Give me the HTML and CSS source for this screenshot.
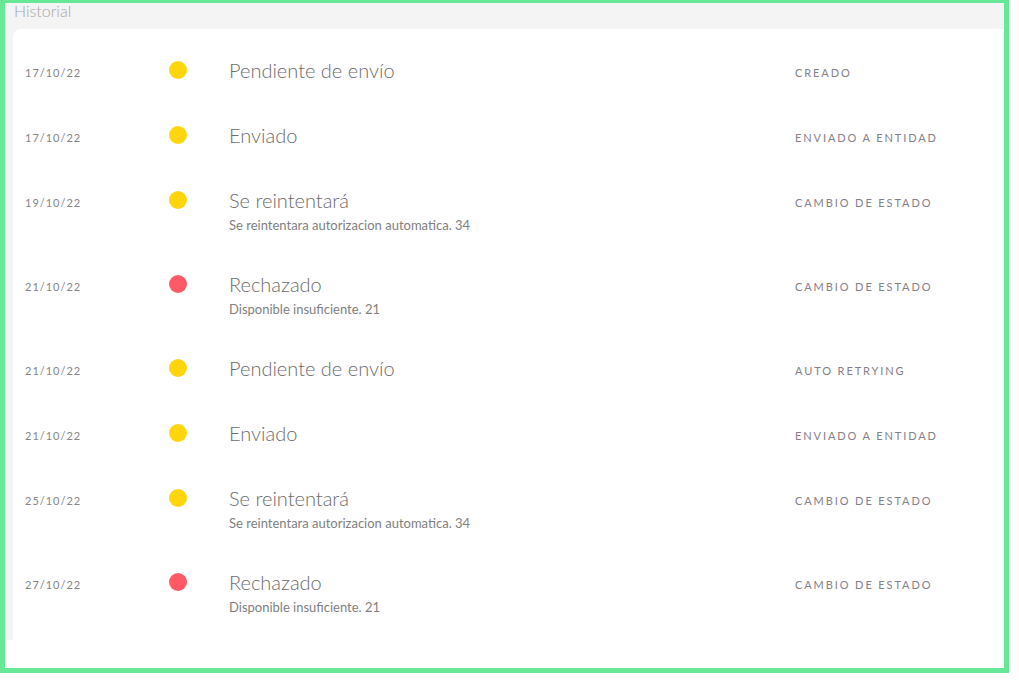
FILE: index.html
```html
<!DOCTYPE html>
<html lang="es">
<head>
<meta charset="utf-8">
<title>Historial</title>
<link rel="stylesheet" href="styles.css">
</head>
<body>
<div class="frame">
  <section class="panel">
    <h2 class="panel-title">Historial</h2>
    <div class="card">
      <div class="row">
        <div class="date">17/10/22</div>
        <div class="dot-cell"><span class="dot yellow"></span></div>
        <div class="info"><div class="title">Pendiente de envío</div></div>
        <div class="label">CREADO</div>
      </div>
      <div class="row">
        <div class="date">17/10/22</div>
        <div class="dot-cell"><span class="dot yellow"></span></div>
        <div class="info"><div class="title">Enviado</div></div>
        <div class="label">ENVIADO A ENTIDAD</div>
      </div>
      <div class="row">
        <div class="date">19/10/22</div>
        <div class="dot-cell"><span class="dot yellow"></span></div>
        <div class="info"><div class="title">Se reintentará</div><div class="sub">Se reintentara autorizacion automatica. 34</div></div>
        <div class="label">CAMBIO DE ESTADO</div>
      </div>
      <div class="row">
        <div class="date">21/10/22</div>
        <div class="dot-cell"><span class="dot red"></span></div>
        <div class="info"><div class="title">Rechazado</div><div class="sub">Disponible insuficiente. 21</div></div>
        <div class="label">CAMBIO DE ESTADO</div>
      </div>
      <div class="row">
        <div class="date">21/10/22</div>
        <div class="dot-cell"><span class="dot yellow"></span></div>
        <div class="info"><div class="title">Pendiente de envío</div></div>
        <div class="label">AUTO RETRYING</div>
      </div>
      <div class="row">
        <div class="date">21/10/22</div>
        <div class="dot-cell"><span class="dot yellow"></span></div>
        <div class="info"><div class="title">Enviado</div></div>
        <div class="label">ENVIADO A ENTIDAD</div>
      </div>
      <div class="row">
        <div class="date">25/10/22</div>
        <div class="dot-cell"><span class="dot yellow"></span></div>
        <div class="info"><div class="title">Se reintentará</div><div class="sub">Se reintentara autorizacion automatica. 34</div></div>
        <div class="label">CAMBIO DE ESTADO</div>
      </div>
      <div class="row">
        <div class="date">27/10/22</div>
        <div class="dot-cell"><span class="dot red"></span></div>
        <div class="info"><div class="title">Rechazado</div><div class="sub">Disponible insuficiente. 21</div></div>
        <div class="label">CAMBIO DE ESTADO</div>
      </div>
    </div>
  </section>
</div>
</body>
</html>
```

FILE: styles.css
```css
* { box-sizing: border-box; }
html, body {
  margin: 0;
  padding: 0;
  background: #ffffff;
  font-family: Lato, "Open Sans", "Liberation Sans", sans-serif;
}
.frame {
  width: 1009px;
  height: 673px;
  border: 5px solid #66e896;
  border-top-width: 3px;
  overflow: hidden;
  background: #ffffff;
}
.panel {
  height: 637px;
  background: #f4f4f4;
  padding-left: 8px;
  display: flex;
  flex-direction: column;
}
.panel-title {
  margin: 0;
  height: 26px;
  padding-left: 1px;
  font-size: 16px;
  line-height: 16px;
  font-weight: 300;
  color: #a6a6a6;
}
.card {
  flex: 1;
  width: 1010px;
  background: #ffffff;
  border-radius: 8px 0 0 0;
  padding: 9px 0 0 12px;
}
.row {
  display: grid;
  grid-template-columns: 144px 60px 566px auto;
  align-items: start;
  padding: 20px 0;
}
.date {
  font-size: 11px;
  line-height: 25px;
  letter-spacing: 1px;
  color: #858585;
  position: relative;
  top: 2px;
}
.dot-cell {
  height: 25px;
  display: flex;
  align-items: center;
}
.dot {
  width: 18px;
  height: 18px;
  border-radius: 50%;
  display: block;
  position: relative;
  top: -1px;
}
.dot.yellow { background: #ffd60d; }
.dot.red { background: #ff5a66; }
.title {
  font-size: 20px;
  line-height: 25px;
  font-weight: 300;
  color: #6c6c6c;
}
.sub {
  margin-top: 6px;
  font-size: 13px;
  line-height: 13px;
  color: #7f7f7f;
}
.label {
  font-size: 11px;
  line-height: 25px;
  letter-spacing: 1.9px;
  color: #85808a;
  position: relative;
  top: 2px;
}
```
